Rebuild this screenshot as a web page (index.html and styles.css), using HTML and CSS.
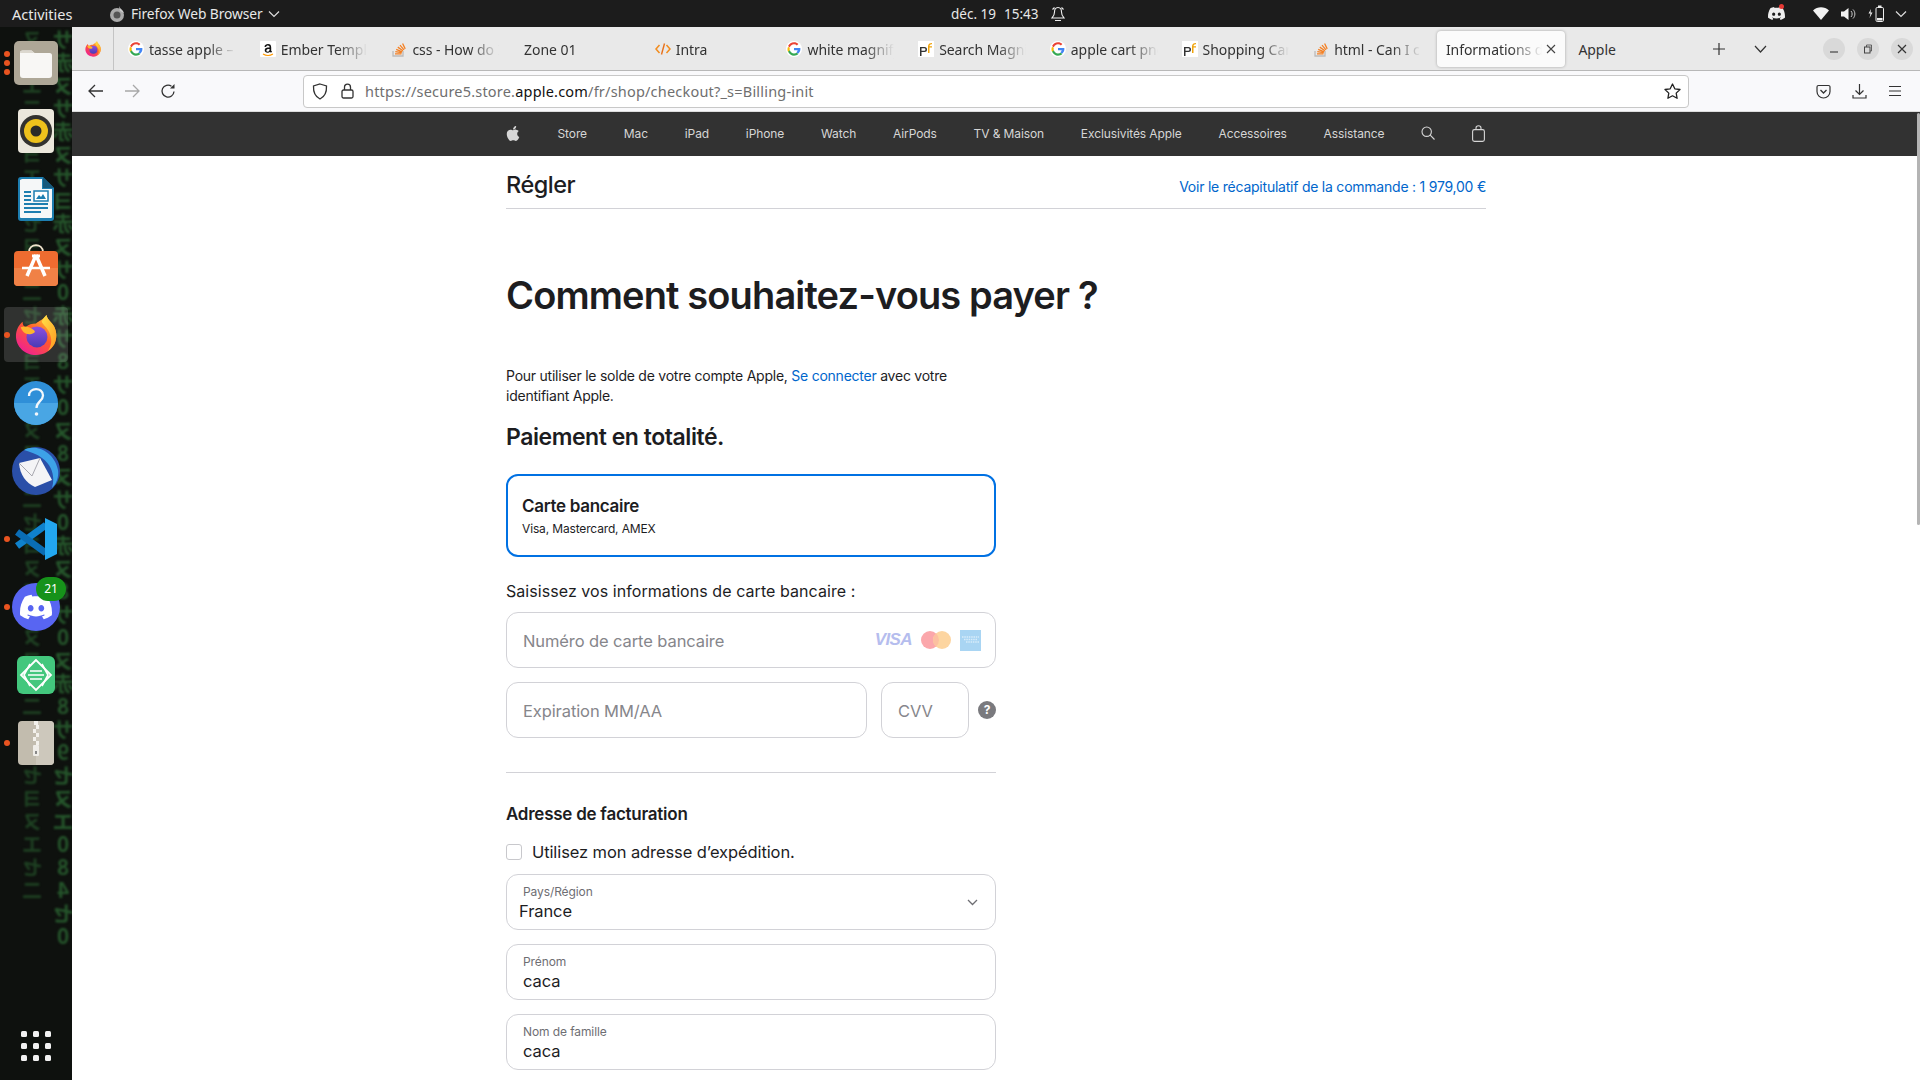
FILE: index.html
```html
<!DOCTYPE html>
<html lang="fr">
<head>
<meta charset="utf-8">
<title>Informations de paiement</title>
<link rel="stylesheet" href="styles.css">
</head>
<body>
<svg class="defs" width="0" height="0" aria-hidden="true">
  <defs>
    <linearGradient id="ffBody" x1="0.8" y1="0.1" x2="0.2" y2="0.9"><stop offset="0" stop-color="#ffbd2e"/><stop offset=".45" stop-color="#ff5a2c"/><stop offset="1" stop-color="#f0248c"/></linearGradient>
    <linearGradient id="ffCore" x1="0.5" y1="0" x2="0.5" y2="1"><stop offset="0" stop-color="#8e4fe0"/><stop offset="1" stop-color="#4a3bb5"/></linearGradient>
    <linearGradient id="ffFlame" x1="0" y1="0" x2="1" y2="1"><stop offset="0" stop-color="#ffe04a"/><stop offset="1" stop-color="#ff9a1f"/></linearGradient>
    <symbol id="firefox" viewBox="0 0 44 44">
      <path d="M33 1c1 5 5 7 8 12 3 6 3 13 0 19-4 7-11 11-19 11C10 43 1 34 1 23 1 17 4 11 8 8c0 3 1 5 3 6 3-3 7-4 11-4 3-3 8-4 11-9z" fill="url(#ffBody)"/>
      <path d="M33 1c1 5 5 7 8 12 3 6 3 13 0 19-2 3-4 5-7 7 4-5 5-11 3-17-2-7-7-10-9-14 1-3 3-5 5-7z" fill="url(#ffFlame)"/>
      <circle cx="23" cy="24" r="11" fill="url(#ffCore)"/>
      <path d="M6 14c5-2 10 0 14 3 2 2 0 3-3 4-5 1-9-1-11-7z" fill="#ffb52c"/>
    </symbol>
    <symbol id="gicon" viewBox="0 0 48 48">
      <circle cx="24" cy="24" r="24" fill="#fff"/>
      <path fill="#EA4335" d="M24 10c3.600 0 6.400 1.300 8.600 3.300l4.600-4.600C33.900 5.600 29.400 4 24 4 16.200 4 9.500 8.500 6.200 15l5.400 4.200C13.200 14 18.100 10 24 10z"/>
      <path fill="#4285F4" d="M43.200 24.400c0-1.400-.1-2.500-.3-3.700H24v7.200h11c-.5 2.500-1.900 4.700-4.100 6.200l5.200 4.100c3.200-2.900 7.100-7.400 7.100-13.800z"/>
      <path fill="#FBBC05" d="M11.600 28.700c-.4-1.200-.7-2.500-.7-3.800 0-1.300.2-2.600.7-3.800l-5.400-4.200C5.100 19.200 4.400 22 4.400 24.900s.7 5.700 1.800 8l5.400-4.200z"/>
      <path fill="#34A853" d="M24 44c5.400 0 9.900-1.800 13.100-4.800l-5.200-4.100c-1.900 1.300-4.400 2.100-7.900 2.100-5.900 0-10.800-4-12.400-9.500l-5.400 4.200C9.500 38.400 16.200 44 24 44z"/>
    </symbol>
    <symbol id="pf" viewBox="0 0 16 16">
      <rect width="16" height="16" fill="#fff"/>
      <path d="M2 6h4.500a2.300 2.300 0 0 1 0 5H3.500v4H2V6zm1.500 1.300v2.400h2.800a1.200 1.200 0 0 0 0-2.400H3.500z" fill="#333"/>
      <path d="M10 5.500C10 3 11.500 2 14 2v1.300c-1.500 0-2.500.4-2.500 2H14v1.300h-2.500V12H10V5.500z" fill="#f0a30a"/>
    </symbol>
    <symbol id="so" viewBox="0 0 16 16">
      <path d="M2 10v5h10v-5" fill="none" stroke="#bcbbbb" stroke-width="1.300"/>
      <path d="M4 12.800h6.500M4.300 10.600l6.400 1.100M5.200 8.300l6 2.500M6.800 6.100l5.100 3.700M9 4.100l4 4.700M11.600 2.500l2.600 5.400" stroke="#f48024" stroke-width="1.300" fill="none"/>
    </symbol>
    <symbol id="discord" viewBox="0 0 24 24">
      <path d="M20.317 4.3698a19.7913 19.7913 0 00-4.8851-1.5152.0741.0741 0 00-.0785.0371c-.211.3753-.4447.8648-.6083 1.2495-1.8447-.2762-3.68-.2762-5.4868 0-.1636-.3933-.4058-.8742-.6177-1.2495a.077.077 0 00-.0785-.037 19.7363 19.7363 0 00-4.8852 1.515.0699.0699 0 00-.0321.0277C.5334 9.0458-.319 13.5799.0992 18.0578a.0824.0824 0 00.0312.0561c2.0528 1.5076 4.0413 2.4228 5.9929 3.0294a.0777.0777 0 00.0842-.0276c.4616-.6304.8731-1.2952 1.226-1.9942a.076.076 0 00-.0416-.1057c-.6528-.2476-1.2743-.5495-1.8722-.8923a.077.077 0 01-.0076-.1277c.1258-.0943.2517-.1923.3718-.2914a.0743.0743 0 01.0776-.0105c3.9278 1.7933 8.18 1.7933 12.0614 0a.0739.0739 0 01.0785.0095c.1202.099.246.1981.3728.2924a.077.077 0 01-.0066.1276 12.2986 12.2986 0 01-1.873.8914.0766.0766 0 00-.0407.1067c.3604.698.7719 1.3628 1.225 1.9932a.076.076 0 00.0842.0286c1.961-.6067 3.9495-1.5219 6.0023-3.0294a.077.077 0 00.0313-.0552c.5004-5.177-.8382-9.6739-3.5485-13.6604a.061.061 0 00-.0312-.0286zM8.02 15.3312c-1.1825 0-2.1569-1.0857-2.1569-2.419 0-1.3332.9555-2.4189 2.157-2.4189 1.2108 0 2.1757 1.0952 2.1568 2.419 0 1.3332-.9555 2.4189-2.1569 2.4189zm7.9748 0c-1.1825 0-2.1569-1.0857-2.1569-2.419 0-1.3332.9554-2.4189 2.1569-2.4189 1.2108 0 2.1757 1.0952 2.1568 2.419 0 1.3332-.946 2.4189-2.1568 2.4189Z" fill="currentColor"/>
    </symbol>
  </defs>
</svg>

<header class="topbar">
  <span class="activities">Activities</span>
  <div class="appmenu">
    <svg class="appmenu-icon" width="18" height="18" viewBox="0 0 18 18"><circle cx="9" cy="10" r="7" fill="#aaa"/><circle cx="9" cy="10" r="3.500" fill="#555"/><path d="M11 1c1 3 4 4 5 7l-4-2z" fill="#ccc"/></svg>
    <span>Firefox Web Browser</span>
    <svg class="chev" width="12" height="8" viewBox="0 0 12 8"><path d="M1 1.500l5 5 5-5" fill="none" stroke="#ddd" stroke-width="1.200"/></svg>
  </div>
  <div class="clock">
    <span>déc. 19</span><span class="clock-time">15:43</span>
    <svg width="14" height="16" viewBox="0 0 14 16"><path d="M7 1.500c-2.600 0-3.500 2-3.500 4.500 0 3-1 4.500-2.500 6h12c-1.500-1.500-2.500-3-2.500-6 0-2.500-.9-4.500-3.500-4.500zM4 14.500h6M1.500 3.500L3.500 1.500M12.500 3.500l-2-2" fill="none" stroke="#eee" stroke-width="1.100"/></svg>
  </div>
  <div class="tray">
    <span class="tray-discord"><svg width="17" height="17" color="#eee"><use href="#discord"/></svg><i class="tray-dot"></i></span>
    <svg class="tray-wifi" width="16" height="13" viewBox="0 0 16 13"><path d="M0 3.500C4.500-.7 11.500-.7 16 3.500L8 13z" fill="#f2f2f2"/></svg>
    <svg class="tray-vol" width="15" height="14" viewBox="0 0 15 14"><path d="M0 4.500h3L7.500 1v12L3 9.500H0z" fill="#f2f2f2"/><path d="M10 4c1.500 1.500 1.500 4.500 0 6M12 2.500c2.500 2.500 2.500 6.500 0 9" fill="none" stroke="#ccc" stroke-width="1"/></svg>
    <svg class="tray-bat" width="17" height="17" viewBox="0 0 17 17"><path d="M3 4L0.500 8.500h2L1.500 13l3-5.500h-2z" fill="#eee"/><rect x="8" y="2.500" width="7.500" height="14" rx="1.200" fill="none" stroke="#eee"/><rect x="10" y=".5" width="3.500" height="2" fill="#eee"/><rect x="9" y="13" width="5.500" height="2.500" fill="#eee"/></svg>
    <svg class="tray-chev" width="12" height="8" viewBox="0 0 12 8"><path d="M1 1.500l5 5 5-5" fill="none" stroke="#ddd" stroke-width="1.200"/></svg>
  </div>
</header>

<div class="desktop">
  <aside class="dock">
    <div class="matrix" aria-hidden="true">
      <div class="mx-col mx-a">ヌヨエ二ヌヨエ二セヨヌ二セヌヨエ二ヌヨエ二セヨヌ二セヌヨエ二ヌ二セヨヌエセ二</div>
      <div class="mx-col mx-b">サ赤ヌサ赤ヌサヨ赤ヌサ0赤サ8サ0ヌ8ヌサ0赤ヌ8サ0ヌ赤8サ9セヌエ084セ0</div>
    </div>
    <ul class="dock-list">
      <li class="dock-item running-3">
        <svg width="44" height="44" viewBox="0 0 44 44"><rect width="44" height="44" rx="5" fill="#aea797"/><path d="M6 12a2.500 2.500 0 0 1 2.500-2.500h9l3 2.500h15A2.500 2.500 0 0 1 38 14.500V34a3 3 0 0 1-3 3H9a3 3 0 0 1-3-3z" fill="#f8f7f5"/><path d="M6 12a2.500 2.500 0 0 1 2.500-2.500h9l3 2.500z" fill="#dcd8cf"/></svg>
      </li>
      <li class="dock-item">
        <svg width="36" height="44" viewBox="0 0 36 44"><rect width="36" height="44" rx="4" fill="#ebe7dc"/><circle cx="18" cy="22" r="16" fill="#33322f"/><circle cx="18" cy="22" r="12" fill="#eec11c"/><circle cx="18" cy="22" r="5.500" fill="#2b2a28"/></svg>
      </li>
      <li class="dock-item">
        <svg width="36" height="44" viewBox="0 0 36 44"><path d="M3 0h22l11 11v30a3 3 0 0 1-3 3H3a3 3 0 0 1-3-3V3a3 3 0 0 1 3-3z" fill="#1d7eb0"/><path d="M4 2h20v10h10v28a1 1 0 0 1-1 1H3a1 1 0 0 1-1-1V3z" fill="#f5f7f8"/><path d="M25 0l11 11H25z" fill="#17597c"/><rect x="16" y="14" width="14" height="10" fill="#fff" stroke="#1d7eb0" stroke-width="1.500"/><path d="M18 22l3-4 2 2 2-3 3 5z" fill="#1d7eb0"/><path d="M6 15h7M6 19h7M6 23h7M6 27h24M6 31h24M6 35h17" stroke="#1d7eb0" stroke-width="1.800"/></svg>
      </li>
      <li class="dock-item dock-store">
        <svg width="44" height="42" viewBox="0 0 44 42"><path d="M15 8c0-9 14-9 14 0" fill="none" stroke="#efe3cc" stroke-width="1.800"/><rect y="7" width="44" height="35" rx="4" fill="#ee6c30"/><path d="M0 24h44v14a4 4 0 0 1-4 4H4a4 4 0 0 1-4-4z" fill="#f08146"/><path d="M22 11L13 32M22 11l9 21" stroke="#fff" stroke-width="3.500"/><path d="M8 24h28" stroke="#fff" stroke-width="2.500"/><path d="M18 12h8" stroke="#fff" stroke-width="3"/></svg>
      </li>
      <li class="dock-item dock-active running-1">
        <svg width="42" height="44"><use href="#firefox"/></svg>
      </li>
      <li class="dock-item">
        <svg width="44" height="44" viewBox="0 0 44 44"><circle cx="22" cy="22" r="22" fill="#2f8fd8"/><path d="M0 22a22 22 0 0 0 44 0z" fill="#49a6e4"/><path d="M15 15c0-9 14-9 14-.5 0 5.500-6.500 6-6.500 12.500" fill="none" stroke="#f3f7fb" stroke-width="2.300"/><circle cx="22.500" cy="33" r="1.800" fill="#f3f7fb"/></svg>
      </li>
      <li class="dock-item">
        <svg width="48" height="48" viewBox="0 0 48 48"><circle cx="24" cy="24" r="24" fill="#2a4fa8"/><path d="M12 3c10-6 30 0 34 20 1 8-2 14-6 18 3-10 1-22-10-30-5-4-12-6-18-8z" fill="#3da2e8"/><path d="M7 16l21-5 12 22-17 7C14 36 8 28 7 16z" fill="#f4f4f6"/><path d="M7 16l13 13 8-18" fill="none" stroke="#a8a8b0" stroke-width="1"/></svg>
      </li>
      <li class="dock-item running-1">
        <svg width="42" height="42" viewBox="0 0 42 42"><path d="M31 7L2 28" stroke="#0f82cc" stroke-width="7" fill="none"/><path d="M31 35L2 14" stroke="#0a6db5" stroke-width="7" fill="none"/><path d="M30 0l12 6v30l-12 6z" fill="#22a7f0"/></svg>
      </li>
      <li class="dock-item running-1">
        <span class="discord-round"><svg width="32" height="32" color="#fff"><use href="#discord"/></svg></span>
        <span class="dock-badge">21</span>
      </li>
      <li class="dock-item">
        <svg width="38" height="38" viewBox="0 0 38 38"><rect width="38" height="38" rx="6" fill="#43c77d"/><path d="M19 4L4 19l15 15 15-15z" fill="none" stroke="#fff" stroke-width="1.800"/><path d="M13 8l-6 11 6 11M25 8l6 11-6 11M13 15h12M11 19h16M13 23h12" fill="none" stroke="#fff" stroke-width="1.600"/></svg>
      </li>
      <li class="dock-item running-1">
        <svg width="36" height="44" viewBox="0 0 36 44"><rect width="36" height="44" rx="4" fill="#c2bcae"/><path d="M18 0h14a4 4 0 0 1 4 4v36a4 4 0 0 1-4 4H18z" fill="#cdc8bc"/><path d="M16 0h4v4h-4zM18 4h3v4h-3zM15 8h3v4h-3zM18 12h3v4h-3zM15 16h3v4h-3zM18 20h3v4h-3z" fill="#f3f1ec"/><rect x="15" y="24" width="6" height="11" rx="1" fill="#efede8"/><rect x="17" y="30" width="2" height="3" fill="#888"/></svg>
      </li>
      <li class="dock-item dock-grid">
        <span class="grid-dots"><i></i><i></i><i></i><i></i><i></i><i></i><i></i><i></i><i></i></span>
      </li>
    </ul>
  </aside>

  <main class="browser">
    <div class="tabbar">
      <div class="ffview"><svg width="16" height="16"><use href="#firefox"/></svg></div>
      <div class="tabs">
        <div class="tab"><svg class="fav" width="16" height="16"><use href="#gicon"/></svg><span class="tab-title">tasse apple – Recherche</span></div>
        <div class="tab"><svg class="fav" width="16" height="16" viewBox="0 0 16 16"><rect width="16" height="16" rx="1" fill="#fff"/><path d="M9.600 6.700c0-1.500-.4-2.300-1.700-2.300-1 0-1.700.6-1.900 1.500l-1.600-.2C4.800 4 6.300 3 8 3c2.200 0 3.200 1.200 3.200 3.400v3.300l.9 1-1.200 1-.9-1c-.8.800-1.500 1-2.500 1-1.600 0-2.800-.9-2.800-2.400 0-2.200 2-3 4.900-3zm0 1.300c-2 0-3.200.4-3.200 1.600 0 .8.500 1.200 1.200 1.200 1.400 0 2-1.300 2-2.800z" fill="#111"/><path d="M3 13c3 1.800 7 1.800 10 0" fill="none" stroke="#f90" stroke-width="1.100"/></svg><span class="tab-title">Ember Templates</span></div>
        <div class="tab"><svg class="fav" width="16" height="16"><use href="#so"/></svg><span class="tab-title">css - How do I add</span></div>
        <div class="tab"><span class="tab-title tab-nofav">Zone 01</span></div>
        <div class="tab"><svg class="fav" width="16" height="14" viewBox="0 0 16 14"><path d="M4.500 3L1 7l3.500 4M11.500 3L15 7l-3.500 4" fill="none" stroke="#f28c1e" stroke-width="1.500"/><path d="M9.500 1.500l-3 11" stroke="#e8701a" stroke-width="1.400"/></svg><span class="tab-title">Intra</span></div>
        <div class="tab"><svg class="fav" width="16" height="16"><use href="#gicon"/></svg><span class="tab-title">white magnifying</span></div>
        <div class="tab"><svg class="fav" width="16" height="16"><use href="#pf"/></svg><span class="tab-title">Search Magnifier</span></div>
        <div class="tab"><svg class="fav" width="16" height="16"><use href="#gicon"/></svg><span class="tab-title">apple cart png</span></div>
        <div class="tab"><svg class="fav" width="16" height="16"><use href="#pf"/></svg><span class="tab-title">Shopping Cart</span></div>
        <div class="tab"><svg class="fav" width="16" height="16"><use href="#so"/></svg><span class="tab-title">html - Can I change</span></div>
        <div class="tab tab-active"><span class="tab-title">Informations de paiement</span><svg class="tab-x" width="10" height="10" viewBox="0 0 10 10"><path d="M1 1l8 8M9 1l-8 8" stroke="#444" stroke-width="1.100"/></svg></div>
        <div class="tab tab-plain"><span class="tab-title">Apple</span></div>
      </div>
      <svg class="tab-plus" width="12" height="12" viewBox="0 0 12 12"><path d="M6 0v12M0 6h12" stroke="#333" stroke-width="1.200"/></svg>
      <svg class="tab-list" width="13" height="8" viewBox="0 0 13 8"><path d="M1 1l5.500 6L12 1" fill="none" stroke="#333" stroke-width="1.200"/></svg>
      <div class="winbtns">
        <span class="winbtn"><svg width="10" height="10" viewBox="0 0 10 10"><path d="M1 8h8" stroke="#444" stroke-width="1.200"/></svg></span>
        <span class="winbtn"><svg width="10" height="10" viewBox="0 0 10 10"><rect x="1.500" y="3" width="5.500" height="6" fill="none" stroke="#444"/><path d="M3.500 3V1h5v6H7" fill="none" stroke="#444" stroke-width=".8"/></svg></span>
        <span class="winbtn"><svg width="10" height="10" viewBox="0 0 10 10"><path d="M1 1l8 8M9 1l-8 8" stroke="#333" stroke-width="1.200"/></svg></span>
      </div>
    </div>

    <div class="toolbar">
      <svg class="tb-back" width="16" height="14" viewBox="0 0 16 14"><path d="M15 7H1.500M7 1L1 7l6 6" fill="none" stroke="#333" stroke-width="1.300"/></svg>
      <svg class="tb-fwd" width="16" height="14" viewBox="0 0 16 14"><path d="M1 7h13.500M9 1l6 6-6 6" fill="none" stroke="#a8a8a8" stroke-width="1.300"/></svg>
      <svg class="tb-reload" width="16" height="16" viewBox="0 0 16 16"><path d="M14 8.500A6 6 0 1 1 11.500 3.200" fill="none" stroke="#333" stroke-width="1.300"/><path d="M14.500 1v4.500H10z" fill="#333"/></svg>
      <div class="urlbar">
        <svg class="url-shield" width="16" height="17" viewBox="0 0 16 17"><path d="M8 1l6.500 2c.3 6-1.500 10.500-6.500 13C3 13.500 1.200 9 1.500 3z" fill="none" stroke="#333" stroke-width="1.300"/></svg>
        <svg class="url-lock" width="13" height="16" viewBox="0 0 13 16"><rect x="1" y="7" width="11" height="8" rx="1.500" fill="none" stroke="#333" stroke-width="1.300"/><path d="M3.500 7V4.200a3 3 0 0 1 6 0V7" fill="none" stroke="#333" stroke-width="1.300"/></svg>
        <span class="url-text">https://secure5.store.<b>apple.com</b>/fr/shop/checkout?_s=Billing-init</span>
        <svg class="url-star" width="17" height="16" viewBox="0 0 17 16"><path d="M8.500 1l2.300 4.800 5.200.7-3.800 3.600.9 5.200-4.600-2.500-4.600 2.500.9-5.200L1 6.500l5.200-.7z" fill="none" stroke="#222" stroke-width="1.300" stroke-linejoin="round"/></svg>
      </div>
      <div class="tb-right">
        <svg width="15" height="15" viewBox="0 0 15 15"><path d="M2.500 1.500h10A1.500 1.500 0 0 1 14 3v4.500a6.500 6.500 0 0 1-13 0V3a1.500 1.500 0 0 1 1.500-1.500z" fill="none" stroke="#333" stroke-width="1.200"/><path d="M4.500 6l3 3 3-3" fill="none" stroke="#333" stroke-width="1.300"/></svg>
        <svg width="15" height="16" viewBox="0 0 15 16"><path d="M7.500 1v10M3.500 7.500l4 4 4-4M1 12v3h13v-3" fill="none" stroke="#333" stroke-width="1.200"/></svg>
        <svg width="14" height="12" viewBox="0 0 14 12"><path d="M1 1.500h12M1 6h12M1 10.500h12" stroke="#333" stroke-width="1.200"/></svg>
      </div>
    </div>

    <div class="viewport">
      <nav class="applenav">
        <svg class="nav-apple" width="14" height="17" viewBox="0 0 384 512"><path fill="#d6d6d6" d="M318.700 268.700c-.2-36.700 16.400-64.400 50-84.800-18.800-26.900-47.200-41.700-84.700-44.600-35.500-2.800-74.300 20.700-88.500 20.700-15 0-49.400-19.700-76.400-19.700C63.300 141.200 4 184.800 4 273.500q0 39.300 14.400 81.200c12.800 36.700 59 126.700 107.200 125.200 25.200-.6 43-17.900 75.800-17.900 31.800 0 48.300 17.900 76.400 17.900 48.600-.7 90.400-82.500 102.600-119.300-65.200-30.700-61.700-90-61.700-91.900zm-56.600-164.200c27.300-32.400 24.800-61.900 24-72.500-24.100 1.400-52 16.400-67.900 34.900-17.500 19.800-27.800 44.300-25.600 71.900 26.100 2 49.900-11.400 69.500-34.300z"/></svg>
        <a>Store</a><a>Mac</a><a>iPad</a><a>iPhone</a><a>Watch</a><a>AirPods</a><a>TV &amp; Maison</a><a>Exclusivités Apple</a><a>Accessoires</a><a>Assistance</a>
        <svg class="nav-search" width="14" height="14" viewBox="0 0 14 14"><circle cx="5.700" cy="5.700" r="4.700" fill="none" stroke="#d6d6d6" stroke-width="1.100"/><path d="M9.200 9.200l4.300 4.300" stroke="#d6d6d6" stroke-width="1.100"/></svg>
        <svg class="nav-bag" width="13" height="17" viewBox="0 0 13 17"><rect x=".6" y="4.600" width="11.800" height="11.800" rx="1.800" fill="none" stroke="#d6d6d6" stroke-width="1.100"/><path d="M4 4.600V3a2.500 2.200 0 0 1 5 0v1.600" fill="none" stroke="#d6d6d6" stroke-width="1.100"/></svg>
      </nav>

      <div class="page">
        <div class="checkout-head">
          <h2 class="checkout-title">Régler</h2>
          <a class="summary-link">Voir le récapitulatif de la commande : 1 979,00 €</a>
        </div>
        <h1 class="page-title">Comment souhaitez-vous payer ?</h1>
        <div class="form-col">
          <p class="signin">Pour utiliser le solde de votre compte Apple, <a>Se connecter</a> avec votre identifiant Apple.</p>
          <h3 class="pay-title">Paiement en totalité.</h3>
          <div class="pay-option">
            <strong>Carte bancaire</strong>
            <span>Visa, Mastercard, AMEX</span>
          </div>
          <p class="card-label">Saisissez vos informations de carte bancaire :</p>
          <div class="field field-card">
            <span class="placeholder">Numéro de carte bancaire</span>
            <span class="card-logos">
              <span class="visa">VISA</span>
              <svg width="30" height="18" viewBox="0 0 30 18"><circle cx="9" cy="9" r="9" fill="#fba7ab"/><circle cx="21" cy="9" r="9" fill="#fdd5a0"/><path d="M15 2.300a9 9 0 0 1 0 13.400 9 9 0 0 1 0-13.400z" fill="#fcc0a0"/></svg>
              <svg width="21" height="21" viewBox="0 0 21 21"><rect width="21" height="21" fill="#a9d5f3"/><path d="M2 7h17M4 9.500h13M6 12h13" stroke="#d8ecfa" stroke-width="1.300" stroke-dasharray="1.500 .8"/></svg>
            </span>
          </div>
          <div class="exp-row">
            <div class="field field-exp"><span class="placeholder">Expiration MM/AA</span></div>
            <div class="field field-cvv"><span class="placeholder">CVV</span></div>
            <span class="help">?</span>
          </div>
          <hr class="divider">
          <h3 class="bill-title">Adresse de facturation</h3>
          <label class="same-addr"><span class="checkbox"></span>Utilisez mon adresse d’expédition.</label>
          <div class="field field-float field-select">
            <span class="float-label">Pays/Région</span>
            <span class="float-value value-select">France</span>
            <svg class="select-chev" width="11" height="7" viewBox="0 0 11 7"><path d="M1 1l4.500 4.500L10 1" fill="none" stroke="#6e6e73" stroke-width="1.300"/></svg>
          </div>
          <div class="field field-float">
            <span class="float-label">Prénom</span>
            <span class="float-value">caca</span>
          </div>
          <div class="field field-float">
            <span class="float-label">Nom de famille</span>
            <span class="float-value">caca</span>
          </div>
        </div>
      </div>
      <div class="scrollthumb"></div>
    </div>
  </main>
</div>
</body>
</html>
```

FILE: styles.css
```css
* { box-sizing: border-box; }
html, body { margin: 0; height: 100%; overflow: hidden; }
body { width: 1920px; height: 1080px; background: #fff; font-family: Inter, "Liberation Sans", sans-serif; color: #1d1d1f; display: flex; flex-direction: column; }
.defs { position: absolute; }
svg { flex: none; display: block; }

/* top bar */
.topbar { height: 27px; flex: none; background: #1c1c1c; color: #e8e8e8; display: flex; align-items: center; font-family: "Noto Sans", sans-serif; font-size: 13.8px; padding-left: 12px; }
.activities { width: 97px; font-size: 14.500px; letter-spacing: 0; }
.appmenu { display: flex; align-items: center; width: 842px; gap: 4px; letter-spacing: -.1px; }
.appmenu-icon { margin-right: 1px; margin-left: -1px; }
.chev { margin-left: 1px; }
.clock { display: flex; align-items: center; gap: 8px; width: 640px; font-size: 13.500px; }
.clock-time { margin-right: 5px; }
.tray { display: flex; align-items: center; position: relative; }
.tray-discord { position: relative; display: block; margin-left: 177px; }
.tray-dot { position: absolute; right: 1px; top: -1px; width: 5px; height: 5px; border-radius: 50%; background: #e53935; }
.tray-wifi { margin-left: 28px; }
.tray-vol { margin-left: 12px; }
.tray-bat { margin-left: 12px; }
.tray-chev { margin-left: 10px; }

/* desktop */
.desktop { flex: 1; display: flex; min-height: 0; }
.dock { width: 72px; flex: none; background: #0e110e; position: relative; overflow: hidden; }
.matrix { position: absolute; inset: 0; display: flex; font-family: "Noto Sans CJK JP", "DejaVu Sans", sans-serif; font-weight: 700; font-size: 20px; line-height: 23px; color: #25552b; transform: scaleX(-1); filter: blur(.8px); }
.mx-col { text-align: center; word-break: break-all; }
.mx-a { order: 2; width: 20px; margin-left: 10px; opacity: .7; }
.mx-b { order: 1; width: 22px; margin-left: -2px; font-size: 21px; }
.dock-list { list-style: none; margin: 0; padding: 2px 0 0; position: relative; height: 100%; display: flex; flex-direction: column; }
.dock-item { height: 68px; width: 72px; flex: none; display: flex; align-items: center; justify-content: center; position: relative; }
.dock-store > svg { margin-top: -4px; }
.dock-active::after { content: ""; position: absolute; left: 4px; right: 4px; top: 6px; bottom: 7px; background: rgba(255,255,255,.14); border-radius: 4px; }
.dock-active svg { position: relative; z-index: 1; }
.running-1::before { content: ""; position: absolute; left: 4px; top: 31px; width: 6px; height: 6px; border-radius: 50%; background: #e95420; z-index: 2; }
.running-3::before { content: ""; position: absolute; left: 4px; top: 22px; width: 6px; height: 6px; border-radius: 50%; background: #e95420; box-shadow: 0 9px 0 #e95420, 0 18px 0 #e95420; }
.discord-round { width: 48px; height: 48px; border-radius: 50%; background: #5865f2; display: flex; align-items: center; justify-content: center; }
.dock-badge { position: absolute; left: 36px; top: 4px; width: 30px; height: 24px; border-radius: 12px; background: #16921a; color: #fff; font: 12px/24px "Noto Sans", sans-serif; text-align: center; }
.dock-grid { margin-top: auto; }
.grid-dots { display: grid; grid-template-columns: repeat(3, 6px); gap: 6px; }
.grid-dots i { width: 6px; height: 6px; border-radius: 1.500px; background: #f2f2f2; }

/* browser chrome */
.browser { flex: 1; min-width: 0; display: flex; flex-direction: column; }
.tabbar { height: 44px; flex: none; background: #e9e9e9; border-bottom: 1px solid #b8b8b8; display: flex; align-items: center; font-family: "Noto Sans", sans-serif; font-size: 14px; color: #333; }
.ffview { width: 42px; height: 43px; flex: none; border-right: 1px solid #c4c4c4; display: flex; align-items: center; justify-content: center; }
.tabs { display: flex; height: 36px; align-items: center; padding-left: 6px; }
.tab { width: 131.700px; height: 36px; flex: none; display: flex; align-items: center; gap: 5px; padding: 1px 14px 0 8px; overflow: hidden; }
.fav { flex: none; }
.tab-title { white-space: nowrap; overflow: hidden; flex: 1; -webkit-mask-image: linear-gradient(90deg, #000 65%, transparent 98%); mask-image: linear-gradient(90deg, #000 65%, transparent 98%); letter-spacing: -.05px; }
.tab-nofav { padding-left: 1px; }
.tab-active { width: 128.500px; background: #fbfbfb; border-radius: 4px; box-shadow: 0 0 3px rgba(0,0,0,.3); padding: 1px 9px 0 9px; gap: 2px; margin-right: 5px; }
.tab-plain { width: 100px; }
.tab-plain .tab-title { -webkit-mask-image: none; mask-image: none; }
.tab-plus { margin-left: 43px; }
.tab-list { margin-left: 29px; }
.winbtns { display: flex; gap: 12px; margin-left: 56px; }
.winbtn { width: 22px; height: 22px; border-radius: 50%; background: #d9d9d9; display: flex; align-items: center; justify-content: center; }

.toolbar { height: 41px; flex: none; background: #f9f9fb; display: flex; align-items: center; padding-left: 16px; border-bottom: 1px solid #dcdcdc; }
.tb-fwd { margin-left: 20px; }
.tb-reload { margin-left: 20px; }
.urlbar { width: 1386px; height: 33px; margin-left: 127px; background: #fff; border: 1px solid #c8c8c8; border-radius: 4px; display: flex; align-items: center; padding-left: 8px; padding-right: 7px; font-family: "Noto Sans", sans-serif; font-size: 14.500px; color: #6f6f6f; }
.url-lock { margin-left: 13px; }
.url-text { margin-left: 11px; flex: 1; white-space: nowrap; letter-spacing: .2px; }
.url-text b { font-weight: 400; color: #111; }
.tb-right { display: flex; align-items: center; gap: 21px; margin-left: 127px; }

.viewport { flex: 1; min-height: 0; position: relative; background: #fff; overflow: hidden; }
.applenav { height: 44px; background: #323232; display: flex; align-items: center; padding: 0 0 2px 434px; font-size: 12px; color: #d6d6d6; }
.applenav a { margin-left: 36.800px; letter-spacing: -.1px; }
.applenav a:first-of-type { margin-left: 37.500px; }
.nav-search { margin-left: 37px; }
.nav-bag { margin-left: 37px; }
.scrollthumb { position: absolute; right: 0; top: 1px; width: 3px; height: 412px; background: #b4b4b4; border-radius: 2px; }

/* page */
.page { width: 980px; margin-left: 434px; }
.checkout-head { display: flex; justify-content: space-between; align-items: center; height: 53px; padding-top: 4px; border-bottom: 1px solid #d2d2d7; }
.checkout-title { margin: 0; font-size: 23.500px; font-weight: 500; letter-spacing: -.5px; }
.summary-link { color: #0066cc; font-size: 14px; padding-top: 5px; letter-spacing: -.23px; }
.page-title { margin: 62px 0 0; font-size: 38px; line-height: 48px; font-weight: 600; letter-spacing: -.87px; }
.form-col { width: 490px; }
.signin { margin: 47px 0 0; font-size: 14px; line-height: 20px; letter-spacing: -.24px; }
.signin a { color: #0066cc; }
.pay-title { margin: 17px 0 0; font-size: 23px; line-height: 28px; font-weight: 600; letter-spacing: -.45px; }
.pay-option { margin-top: 23px; height: 83px; border: 2px solid #0071e3; border-radius: 12px; padding: 0 14px; display: flex; flex-direction: column; justify-content: center; gap: 4px; }
.pay-option strong { font-size: 17px; line-height: 22px; font-weight: 600; letter-spacing: -.3px; }
.pay-option span { font-size: 12px; line-height: 16px; letter-spacing: -.15px; }
.card-label { margin: 23px 0 0; font-size: 16px; line-height: 22px; letter-spacing: .06px; }
.field { height: 56px; border: 1px solid #d2d2d7; border-radius: 12px; position: relative; background: #fff; }
.placeholder { color: #86868b; font-size: 16.500px; letter-spacing: -.1px; padding-top: 1px; }
.field-card { margin-top: 10px; display: flex; align-items: center; justify-content: space-between; padding: 0 14px 0 16px; }
.card-logos { display: flex; align-items: center; gap: 9px; }
.visa { font-family: "Liberation Sans", sans-serif; font-weight: 700; font-style: italic; font-size: 17px; letter-spacing: -.6px; color: #b5bdee; }
.exp-row { display: flex; align-items: center; margin-top: 14px; }
.field-exp { width: 361px; display: flex; align-items: center; padding-left: 16px; }
.field-cvv { width: 88px; margin-left: 14px; display: flex; align-items: center; padding-left: 16px; }
.help { width: 18px; height: 18px; margin-left: 9px; border-radius: 50%; background: #7a7a7e; color: #fff; font-size: 12px; font-weight: 700; line-height: 18px; text-align: center; }
.divider { margin: 34px 0 0; border: 0; border-top: 1px solid #d2d2d7; }
.bill-title { margin: 29px 0 0; font-size: 17px; line-height: 24px; font-weight: 600; letter-spacing: -.25px; }
.same-addr { display: flex; align-items: center; gap: 10px; margin-top: 14px; font-size: 16.500px; line-height: 24px; letter-spacing: -.1px; }
.checkbox { width: 16px; height: 16px; border: 1px solid #c8c8cc; border-radius: 3px; flex: none; }
.field-float { margin-top: 14px; padding: 9px 16px 0; display: flex; flex-direction: column; }
.same-addr + .field-float { margin-top: 10px; }
.float-label { font-size: 12px; line-height: 16px; color: #6e6e73; letter-spacing: -.1px; }
.float-value { font-size: 16.500px; line-height: 22px; letter-spacing: -.1px; }
.value-select { margin-left: -4px; }
.select-chev { position: absolute; right: 17px; top: 24px; }
```
